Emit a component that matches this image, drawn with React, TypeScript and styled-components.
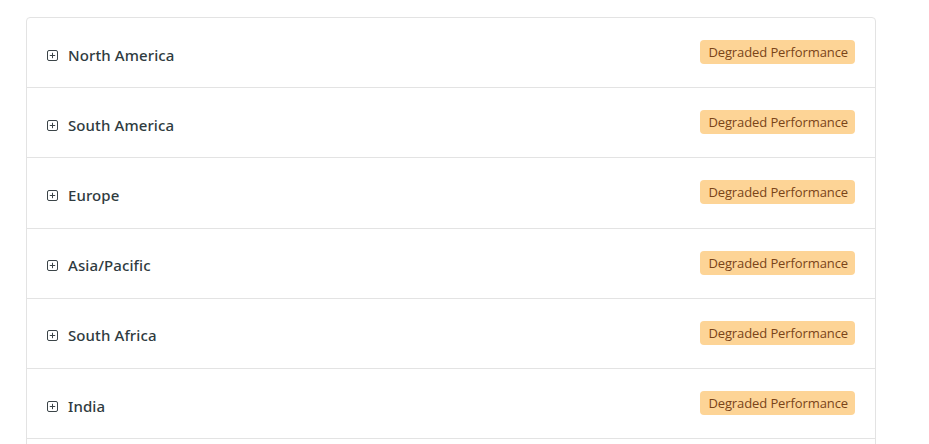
import React from "react";
import styled, { createGlobalStyle } from "styled-components";

const Global = createGlobalStyle`
  html, body { margin: 0; padding: 0; background: #ffffff; }
  body { font-family: "Open Sans", "Noto Sans", Arial, sans-serif; }
`;

const Page = styled.div`
  padding: 17px 0 0 26px;
`;

const Card = styled.div`
  width: 850px;
  box-sizing: border-box;
  border: 1px solid #e3e3e3;
  border-radius: 4px;
  background: #fff;
  padding-bottom: 30px;
`;

const Row = styled.div`
  display: flex;
  align-items: center;
  justify-content: space-between;
  height: 70.2px;
  box-sizing: border-box;
  padding: 0 20px 2px 20px;
  border-bottom: 1px solid #e3e3e3;
`;

const Left = styled.div`
  display: flex;
  align-items: center;
  gap: 10px;
`;

const Name = styled.span`
  font-family: "Noto Sans", "Open Sans", Arial, sans-serif;
  font-size: 15px;
  font-weight: 500;
  color: #2f3b40;
  padding-top: 6px;
  letter-spacing: 0.1px;
`;

const Badge = styled.span`
  display: inline-flex;
  align-items: center;
  height: 24px;
  padding: 0 7px 0 8px;
  border-radius: 4px;
  background: #fdd496;
  color: #7a4418;
  font-size: 13px;
  letter-spacing: -0.1px;
  margin-top: 1px;
`;

const Icon = styled.svg`
  width: 11px;
  height: 11px;
  flex: none;
  margin-top: 7px;
`;

const PlusSquare = () => (
  <Icon viewBox="0 0 11 11">
    <rect x="0.5" y="0.5" width="10" height="10" rx="1.5" fill="none" stroke="#3b4448" strokeWidth="1" />
    <path d="M5.5 2.8v5.4M2.8 5.5h5.4" stroke="#3b4448" strokeWidth="1" />
  </Icon>
);

const regions = ["North America", "South America", "Europe", "Asia/Pacific", "South Africa", "India"];

export default function App() {
  return (
    <>
      <Global />
      <Page>
        <Card>
          {regions.map((r) => (
            <Row key={r}>
              <Left>
                <PlusSquare />
                <Name>{r}</Name>
              </Left>
              <Badge>Degraded Performance</Badge>
            </Row>
          ))}
        </Card>
      </Page>
    </>
  );
}
